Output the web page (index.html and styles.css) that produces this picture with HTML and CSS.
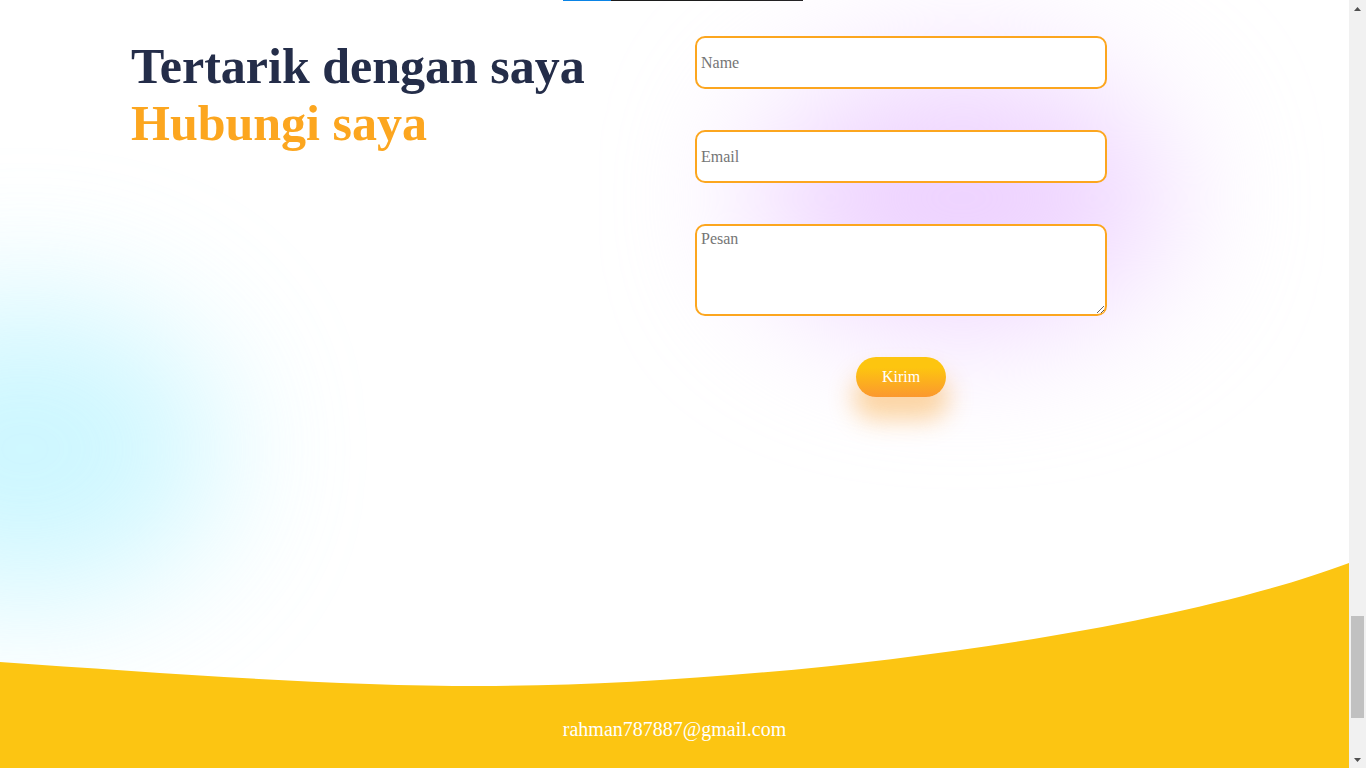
FILE: index.html
```html
<!DOCTYPE html>
<html lang="id">
<head>
<meta charset="utf-8">
<title>Kontak</title>
<link rel="stylesheet" href="styles.css">
</head>
<body>
  <div class="page">
    <div class="prev-end">
      <div class="skill-bar"><span class="skill-fill"></span></div>
    </div>

    <section class="contact" id="contact">
      <div class="blob blob-cyan"></div>
      <div class="blob blob-purple"></div>

      <div class="contact-left">
        <h1 class="contact-title">
          <span class="title-dark">Tertarik dengan saya</span>
          <span class="title-orange">Hubungi saya</span>
        </h1>
      </div>

      <div class="contact-right">
        <form class="contact-form">
          <input type="text" class="field" placeholder="Name">
          <input type="email" class="field" placeholder="Email">
          <textarea class="field field-area" placeholder="Pesan"></textarea>
          <button type="button" class="btn-send">Kirim</button>
        </form>
      </div>
    </section>

    <footer class="footer">
      <svg class="footer-wave" viewBox="0 0 1349 123" preserveAspectRatio="none" aria-hidden="true">
        <path d="M0,99 C160,110 330,123 480,123 C750,123 1150,75 1349,0 L1349,123 L0,123 Z" fill="#fcc512"/>
      </svg>
      <div class="footer-body">
        <p class="footer-mail">rahman787887@gmail.com</p>
      </div>
    </footer>
  </div>

  <div class="scrollbar" aria-hidden="true">
    <div class="sb-btn">
      <svg width="7" height="4" viewBox="0 0 7 4"><path d="M0 4 L3.5 0 L7 4 Z" fill="#505050"/></svg>
    </div>
    <div class="sb-track"><div class="sb-thumb"></div></div>
    <div class="sb-btn">
      <svg width="7" height="4" viewBox="0 0 7 4"><path d="M0 0 L3.5 4 L7 0 Z" fill="#505050"/></svg>
    </div>
  </div>
</body>
</html>
```

FILE: styles.css
```css
:root {
  --orange: #fca61f;
  --dark: #242d49;
  --yellow: #fcc512;
}

html,
body {
  height: 100%;
}

body {
  margin: 0;
  font-family: "Liberation Serif", "Times New Roman", serif;
  background: #ffffff;
  overflow: hidden;
  display: flex;
}

.page {
  flex: 1;
  min-width: 0;
  position: relative;
  overflow: hidden;
}

/* scrollbar strip on the right */
.scrollbar {
  width: 17px;
  flex: none;
  height: 768px;
  background: #f1f1f1;
  display: flex;
  flex-direction: column;
}

.sb-btn {
  height: 17px;
  flex: none;
  display: flex;
  align-items: center;
  justify-content: center;
}

.sb-btn svg {
  display: block;
}

.sb-track {
  flex: 1;
  display: flex;
  flex-direction: column;
  justify-content: flex-end;
  padding: 0 2px 33px;
}

.sb-thumb {
  height: 102px;
  background: #c1c1c1;
}

/* end of previous section */
.prev-end {
  height: 1px;
  display: flex;
  padding-left: 563px;
}

.skill-bar {
  width: 240px;
  height: 1px;
  background: #1c1c1c;
  display: flex;
}

.skill-fill {
  width: 20%;
  background: #0a84e6;
}

/* contact */
.contact {
  position: relative;
  box-sizing: border-box;
  height: 562px;
  padding: 35px 0 0 131px;
  display: flex;
  align-items: flex-start;
}

.blob {
  position: absolute;
  border-radius: 50%;
  filter: blur(72px);
  z-index: 0;
  pointer-events: none;
}

.blob-purple {
  left: 757px;
  top: 72px;
  width: 410px;
  height: 250px;
  background: #edd0ff;
}

.blob-cyan {
  left: -170px;
  top: 298px;
  width: 390px;
  height: 300px;
  background: #abf1ff;
  opacity: 0.6;
}

.contact-left {
  position: relative;
  z-index: 1;
  width: 564px;
  flex: none;
}

.contact-title {
  margin: 2px 0 0;
  font-size: 50px;
  line-height: 57px;
  font-weight: bold;
  display: flex;
  flex-direction: column;
}

.title-dark {
  color: var(--dark);
}

.title-orange {
  color: var(--orange);
}

.contact-right {
  position: relative;
  z-index: 1;
  width: 412px;
}

.contact-form {
  display: flex;
  flex-direction: column;
  align-items: center;
  gap: 41px;
}

.field {
  box-sizing: border-box;
  width: 100%;
  height: 53px;
  margin: 0;
  padding: 0 4px;
  border: 2px solid var(--orange);
  border-radius: 10px;
  outline: none;
  background: #ffffff;
  font-family: "Liberation Serif", "Times New Roman", serif;
  font-size: 16px;
  color: #222;
}

.field-area {
  height: 92px;
  padding: 4px;
  resize: vertical;
  display: block;
}

.btn-send {
  width: 90px;
  height: 40px;
  padding: 0;
  border: none;
  border-radius: 20px;
  background: linear-gradient(180deg, #fdc50f 26%, #fb982f 100%);
  box-shadow: 0 20px 24px 3px rgba(251, 161, 40, 0.42);
  color: #ffffff;
  font-family: "Liberation Serif", "Times New Roman", serif;
  font-size: 16px;
  cursor: pointer;
}

/* footer */
.footer {
  position: relative;
  z-index: 2;
}

.footer-wave {
  display: block;
  width: 100%;
  height: 123px;
}

.footer-body {
  background: var(--yellow);
  padding: 32px 0 27px;
}

.footer-mail {
  margin: 0;
  text-align: center;
  color: #ffffff;
  font-size: 20px;
  line-height: 23px;
}
```
